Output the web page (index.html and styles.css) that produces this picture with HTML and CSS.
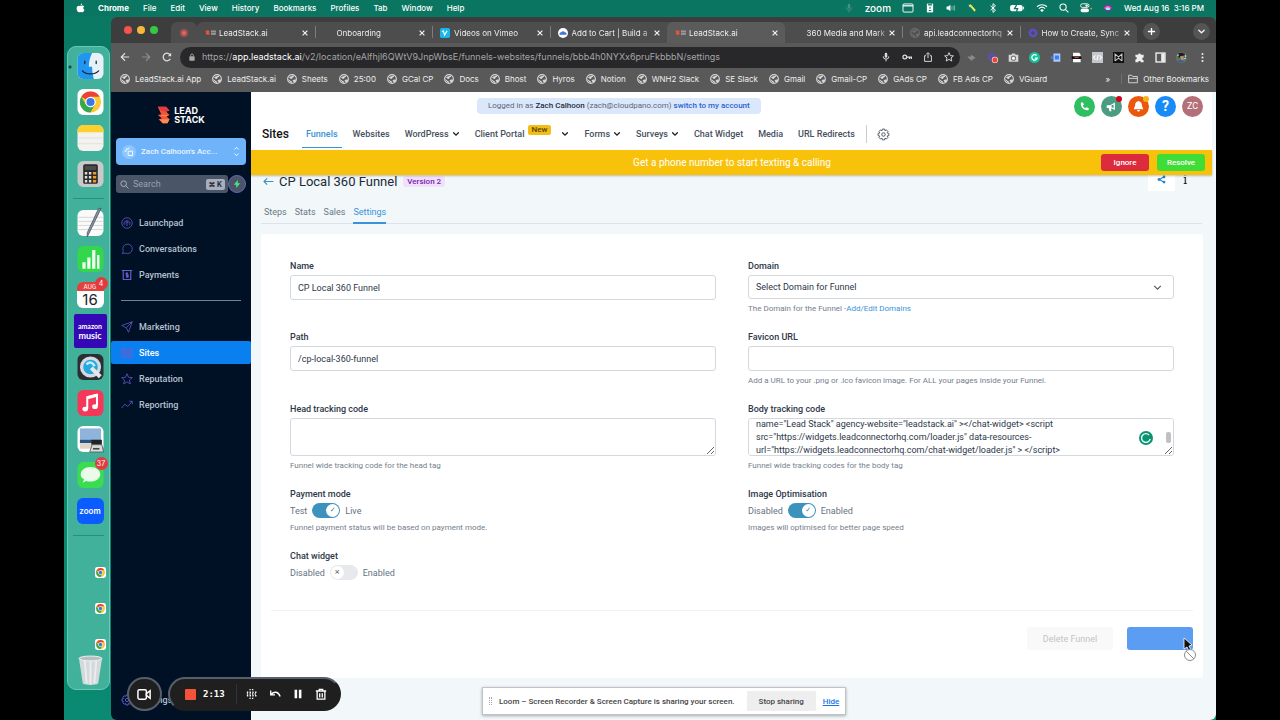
FILE: index.html
```html
<!DOCTYPE html>
<html lang="en">
<head>
    <meta charset="UTF-8">
    <meta name="viewport" content="width=device-width, initial-scale=1.0">
    <title>CP Local 360 Funnel | LeadStack.ai</title>
    <link rel="stylesheet" href="styles.css">
</head>
<body>
    <!-- shared icons -->
    <svg class="sprite" aria-hidden="true">
        <symbol id="i-globe" viewBox="0 0 16 16">
            <circle cx="8" cy="8" r="7" fill="none" stroke="currentColor" stroke-width="1.8"/>
            <path d="M2 5c3 0 3 3 5 3s1-3 3-3 1-3 2-3M1.500 9c3-1 3 2 5 2s1 3 1 4M9 10c2-2 4-1 6-1l-2 4c-3 0-4-1-4-3z" fill="currentColor"/>
        </symbol>
        <symbol id="i-x" viewBox="0 0 10 10">
            <path d="M2 2l6 6M8 2l-6 6" fill="none" stroke="currentColor" stroke-width="1.500"/>
        </symbol>
        <symbol id="i-chev" viewBox="0 0 10 10">
            <path d="M2 3.500l3 3 3-3" fill="none" stroke="currentColor" stroke-width="1.600" stroke-linecap="round"/>
        </symbol>
        <symbol id="i-mic" viewBox="0 0 16 16">
            <rect x="6" y="1" width="4" height="8" rx="2" fill="currentColor"/>
            <path d="M3.500 7a4.500 4.500 0 0 0 9 0M8 11.500V15" fill="none" stroke="currentColor" stroke-width="1.500"/>
        </symbol>
        <symbol id="i-search" viewBox="0 0 16 16">
            <circle cx="6.500" cy="6.500" r="5" fill="none" stroke="currentColor" stroke-width="1.700"/>
            <path d="M10.500 10.500L15 15" stroke="currentColor" stroke-width="1.700"/>
        </symbol>
        <symbol id="i-gear" viewBox="0 0 24 24">
            <path d="M10 2h4l.7 3 2.600-1.600 2.900 2.900L18.600 9l3.400 1v4l-3.400.8 1.600 2.700-2.800 2.900-2.700-1.700-.7 3.300h-4l-.8-3.300-2.700 1.700-2.900-2.900L5.300 15 2 14v-4l3.300-.8-1.600-2.700 2.800-2.900L9.300 5z" fill="none" stroke="currentColor" stroke-width="1.700" stroke-linejoin="round"/>
            <circle cx="12" cy="12" r="3.200" fill="none" stroke="currentColor" stroke-width="1.700"/>
        </symbol>
        <symbol id="i-lead" viewBox="0 0 20 10">
            <path d="M1 1h5l2 2-2 1 2 1-1 3H3L1 6l1-1-1-2z" fill="#e5553a"/>
            <path d="M10 1h8v3h-8zM10 5h8v3h-8z" fill="#a9a9a9"/>
            <path d="M12 2v5M15 1v6" stroke="#666"/>
        </symbol>
        <symbol id="i-chrome" viewBox="0 0 32 32">
            <rect width="32" height="32" rx="7" fill="#fff"/>
            <circle cx="16" cy="16" r="13" fill="#fcc934"/>
            <path d="M16 16L4.700 9.500A13 13 0 0 1 27.300 9.500H16z" fill="#ea4335"/>
            <path d="M4.700 9.500A13 13 0 0 0 16 29l5.500-9.800L16 16 10.400 19z" fill="#34a853"/>
            <circle cx="16" cy="16" r="6.500" fill="#fff"/>
            <circle cx="16" cy="16" r="5" fill="#3b78e7"/>
        </symbol>
    </svg>

    <div class="desktop">
        <header class="menubar">
            <svg class="apple" viewBox="0 0 16 18"><path d="M11 1c0 2-1.500 3.300-3 3.300C8 2.500 9.400 1.200 11 1zM8.200 5.500C9 5.500 10 4.700 11.500 4.700c1.300 0 2.400.7 3 1.600-2.400 1.500-2 5 .7 6-.7 2-2.200 4.500-3.700 4.500-1.200 0-1.600-.7-3-.7s-1.900.7-3 .7C3.300 16.800 1 13.200 1 9.700c0-3 1.900-4.900 4-4.900 1.400 0 2.400.7 3.200.7z" fill="#fff"/></svg>
            <nav class="menus">
                <b>Chrome</b><span>File</span><span>Edit</span><span>View</span><span>History</span><span>Bookmarks</span><span>Profiles</span><span>Tab</span><span>Window</span><span>Help</span>
            </nav>
            <div class="status">
                <svg class="dim" viewBox="0 0 16 16"><use href="#i-mic"/></svg>
                <span class="zoom-word">zoom</span>
                <svg class="wide" viewBox="0 0 18 16"><rect x="1" y="1.500" width="16" height="13" rx="1.500" fill="none" stroke="#fff" stroke-width="1.500"/><path d="M1 4.500h16" stroke="#fff" stroke-width="2"/></svg>
                <svg viewBox="0 0 16 16"><path d="M3 1h10v14H3z" fill="#fff"/><path d="M6 1v2h4V1M8 6v3M6 12h4" fill="none" stroke="#0a7560" stroke-width="1.800"/></svg>
                <svg viewBox="0 0 18 16"><path d="M1 5.500h3L8 2v12l-4-3.500H1z" fill="#fff"/><path d="M10.500 5v6M13 4v8M15.500 3v10" stroke="#fff" stroke-opacity=".7"/></svg>
                <svg viewBox="0 0 16 16"><path d="M3 3l3-1 8 9-2 3z" fill="#f3e84f"/><path d="M3 3l2 4" stroke="#fff"/></svg>
                <svg viewBox="0 0 16 16"><path d="M4 4.500l8 7-4 3.500V1l4 3.500-8 7" fill="none" stroke="#fff" stroke-width="1.500"/></svg>
                <svg class="batt" viewBox="0 0 24 16"><rect x="1" y="3" width="20" height="10" rx="3" fill="#fff"/><path d="M22.500 6v4" stroke="#fff" stroke-width="1.500"/><path d="M12 2L8 9h5l-2 5" fill="none" stroke="#0a7560" stroke-width="2"/></svg>
                <svg class="wide" viewBox="0 0 18 16"><path d="M1 6a11.500 11.500 0 0 1 16 0M4 9a7.500 7.500 0 0 1 10 0" fill="none" stroke="#fff" stroke-width="1.900"/><path d="M9 14.500l-3-3a4.300 4.300 0 0 1 6 0z" fill="#fff"/></svg>
                <svg viewBox="0 0 16 16"><use href="#i-search"/></svg>
                <svg class="wide" viewBox="0 0 20 16"><rect x="1" y="1" width="14" height="6" rx="3" fill="none" stroke="#fff" stroke-width="1.500"/><rect x="1" y="9" width="14" height="6" rx="3" fill="#fff"/><circle cx="11" cy="4" r="2" fill="#fff"/><circle cx="18.500" cy="9" r="1.500" fill="#f59b23"/></svg>
                <svg viewBox="0 0 16 16"><circle cx="8" cy="8" r="7" fill="#514a8d"/><path d="M2 8c4-6 8-4 12 0-4 1-8 5-12 0z" fill="#e86a9a"/><path d="M4 9c3-3 6-2 8 1-2 2-6 2-8-1z" fill="#9ff0ff"/></svg>
                <time>Wed Aug 16&nbsp; 3:16 PM</time>
            </div>
        </header>

        <div class="workspace">
            <aside class="dock" aria-label="Dock">
                <svg class="app" viewBox="0 0 32 32"><rect width="32" height="32" rx="7" fill="#e8f1f7"/><path d="M7 0h11c-3 6-4 11-4 17h4c0 6 1 10 2 15H7a7 7 0 0 1-7-7V7a7 7 0 0 1 7-7z" fill="#2196f0"/><path d="M9 10v3M23 10v3M6 22c5 5 15 5 20 0" fill="none" stroke="#123" stroke-width="1.500" stroke-linecap="round"/></svg>
                <svg class="app"><use href="#i-chrome"/></svg>
                <svg class="app" viewBox="0 0 32 32"><rect width="32" height="32" rx="7" fill="#f3f2ee"/><path d="M0 9V7a7 7 0 0 1 7-7h18a7 7 0 0 1 7 7v2z" fill="#fcd12f"/><path d="M1 16h30M1 23h30" stroke="#deddd9"/></svg>
                <svg class="app" viewBox="0 0 32 32"><rect width="32" height="32" rx="7" fill="#c9c9c9"/><rect x="7" y="4" width="18" height="24" rx="2" fill="#292929"/><rect x="9" y="6" width="14" height="5" fill="#4b4b4b"/><path d="M9 15h3M14 15h3M9 20h3M14 20h3M9 25h3M14 25h3" stroke="#ddd" stroke-width="3"/><path d="M19 15h4M19 20h4M19 25h4" stroke="#f39a25" stroke-width="3"/></svg>
                <hr>
                <svg class="app" viewBox="0 0 32 32"><rect width="32" height="32" rx="7" fill="#fafafa"/><path d="M1 9h30M1 14h30M1 19h30M1 24h30" stroke="#cfcfcf"/><path d="M29-2L14 29l-2 4 0-5L26-2z" fill="#8695a5" stroke="#4b5560"/></svg>
                <svg class="app" viewBox="0 0 32 32"><rect width="32" height="32" rx="7" fill="#32d74b"/><path d="M6 20h4v8H6zM12 14h4v14h-4zM18 5h4v23h-4zM24 11h3v17h-3z" fill="#efffef"/></svg>
                <div class="app calendar"><small>AUG</small><strong>16</strong><i class="badge">4</i></div>
                <div class="app amazon"><span>amazon</span><span>music</span></div>
                <svg class="app" viewBox="0 0 32 32"><rect width="32" height="32" rx="7" fill="#2b2f33"/><circle cx="16" cy="16" r="11" fill="#27a9e0" stroke="#d5dbe0" stroke-width="4"/><path d="M11 13c3-4 8-3 10 2" stroke="#bdefff" stroke-width="3" fill="none"/><path d="M17 17l11 11" stroke="#e4e8eb" stroke-width="5"/></svg>
                <svg class="app" viewBox="0 0 32 32"><rect width="32" height="32" rx="7" fill="#f5385a"/><path d="M12 23V9l12-3v14" fill="none" stroke="#fff" stroke-width="2.500"/><path d="M12 9.500l12-3" stroke="#fff" stroke-width="4"/><ellipse cx="9.500" cy="23.500" rx="3.500" ry="3" fill="#fff"/><ellipse cx="21.500" cy="20.500" rx="3.500" ry="3" fill="#fff"/></svg>
                <svg class="app" viewBox="0 0 32 32"><rect width="32" height="32" rx="7" fill="#fff"/><rect x="3" y="3" width="26" height="17" fill="#8fb4dc"/><path d="M3 17h26v4H3z" fill="#2a5384"/><path d="M3 21h26v7H3z" fill="#dfd6c6"/><path d="M17 17h13v6H17z" fill="#222"/><path d="M18 23h12l2 9H15z" fill="#d9dadb" stroke="#555"/><path d="M19 28h8" stroke="#444" stroke-width="2"/></svg>
                <div class="app messages"><svg viewBox="0 0 32 32"><rect width="32" height="32" rx="7" fill="#3bdd50"/><path d="M16 6c7 0 12 4 12 9s-5 9-12 9c-2 0-4 0-5-1-1 1-3 2-5 2 1-1 2-2 2-4-3-1-4-3-4-6 0-5 5-9 12-9z" fill="#eafbe9"/></svg><i class="badge">37</i></div>
                <div class="app zoom">zoom</div>
                <hr class="before-minis">
                <svg class="app mini"><use href="#i-chrome"/></svg>
                <svg class="app mini"><use href="#i-chrome"/></svg>
                <svg class="app mini"><use href="#i-chrome"/></svg>
                <svg class="trash" viewBox="0 0 26 30"><path d="M1 3l4 26c4 2 12 2 16 0l4-26z" fill="#d4d9dc"/><path d="M7 5l2 24M13 5v25M19 5l-2 24" stroke="#e9edef" stroke-width="2"/><ellipse cx="13" cy="3" rx="12" ry="2.500" fill="#b6bfc3" stroke="#eef1f2"/></svg>
            </aside>

            <div class="browser">
                <div class="tabstrip">
                    <div class="lights"><i></i><i></i><i></i></div>
                    <div class="pinned"><i></i></div>
                    <div class="tabs">
                        <div class="tab"><svg class="fav lead"><use href="#i-lead"/></svg><a href="#">LeadStack.ai</a><button aria-label="Close tab"><svg><use href="#i-x"/></svg></button></div>
                        <div class="tab"><i class="fav"></i><a href="#">Onboarding</a><button aria-label="Close tab"><svg><use href="#i-x"/></svg></button></div>
                        <div class="tab"><svg class="fav" viewBox="0 0 12 12"><rect width="12" height="12" rx="2" fill="#1ab7ea"/><path d="M2.500 4.500L4 3.500l1.500 5 3-5" fill="none" stroke="#fff" stroke-width="1.500"/></svg><a href="#">Videos on Vimeo</a><button aria-label="Close tab"><svg><use href="#i-x"/></svg></button></div>
                        <div class="tab"><svg class="fav" viewBox="0 0 12 12"><circle cx="6" cy="6" r="6" fill="#fff"/><path d="M2 8a2 2 0 0 1 2-3 2.500 2.500 0 0 1 4 0 2 2 0 0 1 2 3z" fill="#3f74d8"/></svg><a href="#">Add to Cart | Build a</a><button aria-label="Close tab"><svg><use href="#i-x"/></svg></button></div>
                        <div class="tab active"><svg class="fav lead"><use href="#i-lead"/></svg><a href="#">LeadStack.ai</a><button aria-label="Close tab"><svg><use href="#i-x"/></svg></button></div>
                        <div class="tab"><i class="fav"></i><a href="#">360 Media and Mark</a><button aria-label="Close tab"><svg><use href="#i-x"/></svg></button></div>
                        <div class="tab"><svg class="fav faint"><use href="#i-globe"/></svg><a href="#">api.leadconnectorhq</a><button aria-label="Close tab"><svg><use href="#i-x"/></svg></button></div>
                        <div class="tab"><svg class="fav" viewBox="0 0 12 12"><circle cx="6" cy="6" r="4" fill="none" stroke="#5a4fcf" stroke-width="3" stroke-dasharray="2 1"/><circle cx="6" cy="6" r="3.500" fill="none" stroke="#5a4fcf" stroke-width="2"/></svg><a href="#">How to Create, Sync</a><button aria-label="Close tab"><svg><use href="#i-x"/></svg></button></div>
                    </div>
                    <button class="round" aria-label="New tab"><svg viewBox="0 0 10 10"><path d="M5 1v8M1 5h8" stroke="#fff" stroke-width="1.500"/></svg></button>
                    <button class="round last" aria-label="Search tabs"><svg><use href="#i-chev"/></svg></button>
                </div>

                <div class="toolbar">
                    <div class="history">
                        <button aria-label="Back"><svg viewBox="0 0 12 12"><path d="M11 6H2M6 1.500L1.500 6 6 10.500" fill="none" stroke="#ddd" stroke-width="1.400"/></svg></button>
                        <button aria-label="Forward"><svg viewBox="0 0 12 12"><path d="M1 6h9M6 1.500L10.500 6 6 10.500" fill="none" stroke="#8c8c8c" stroke-width="1.400"/></svg></button>
                        <button aria-label="Reload"><svg viewBox="0 0 12 12"><path d="M10 8a4.500 4.500 0 1 1 0-4" fill="none" stroke="#ddd" stroke-width="1.500"/><path d="M11 1v4H7z" fill="#ddd"/></svg></button>
                    </div>
                    <div class="omnibox">
                        <svg viewBox="0 0 12 12"><rect x="2" y="5" width="8" height="6.500" rx="1" fill="#aaa"/><path d="M4 5V3.500a2 2 0 0 1 4 0V5" fill="none" stroke="#aaa" stroke-width="1.300"/></svg>
                        <div class="url" role="textbox" contenteditable="true" spellcheck="false" aria-label="Address">https://<b>app.leadstack.ai</b>/v2/location/eAlfhjl6QWtV9JnpWbsE/funnels-websites/funnels/bbb4h0NYXx6pruFkbbbN/settings</div>
                        <div class="omni-icons">
                            <svg><use href="#i-mic"/></svg>
                            <svg viewBox="0 0 16 16"><circle cx="4.500" cy="8" r="3" fill="none" stroke="currentColor" stroke-width="2"/><path d="M7.500 8H15v3M12 8v3" fill="none" stroke="currentColor" stroke-width="2"/></svg>
                            <svg viewBox="0 0 16 16"><path d="M5 6H2.500v9h11V6H11M8 10V1.500M5 4l3-3 3 3" fill="none" stroke="currentColor" stroke-width="1.500"/></svg>
                            <svg viewBox="0 0 16 16"><path d="M8 1l2.100 4.800 5 .4-3.900 3.300 1.300 5L8 11.800l-4.500 2.700 1.300-5L1 6.200l5-.4z" fill="none" stroke="currentColor" stroke-width="1.500"/></svg>
                        </div>
                    </div>
                    <div class="extensions">
                        <svg viewBox="0 0 16 16"><path d="M2 6l5 1V4l4 2 3 3-4 1-1 3-4-3z" fill="#8b8b8b"/></svg>
                        <svg viewBox="0 0 16 16"><circle cx="7" cy="7" r="6" fill="#5a50b8"/><circle cx="7" cy="7" r="2.500" fill="#5a5a5a"/><circle cx="11.500" cy="11.500" r="4.500" fill="#fff"/><circle cx="11.500" cy="11.500" r="3.700" fill="#f0443e"/></svg>
                        <svg viewBox="0 0 16 16"><path d="M1 4h4l1-2h4l1 2h4v10H1z" fill="#d6d6d6"/><circle cx="8" cy="9" r="3" fill="#fff" stroke="#777" stroke-width="1.500"/></svg>
                        <svg viewBox="0 0 16 16"><circle cx="8" cy="8" r="8" fill="#15c39a"/><path d="M11 5a4 4 0 1 0 1 4H8.500" fill="none" stroke="#fff" stroke-width="1.800"/></svg>
                        <svg viewBox="0 0 16 16"><path d="M5 2h10v12H5z" fill="#a9c9ff"/><path d="M1 6h3v4H1zM7 5h6v6H7z" fill="#3d7fe8"/></svg>
                        <svg viewBox="0 0 16 16"><path d="M3 1h9l2 3v11H3z" fill="#fff"/><path d="M1 6h14v4H1z" fill="#111"/><path d="M5 8h6" stroke="#e33" stroke-width="1.500"/></svg>
                        <svg viewBox="0 0 16 16"><path d="M0 0h16v16H0z" fill="#c3c6cb"/><path d="M5 5L2 8l3 3M11 5l3 3-3 3M9 4l-2 8" fill="none" stroke="#fff" stroke-width="1.500"/></svg>
                        <svg viewBox="0 0 16 16"><path d="M0 0h16v16H0z" fill="#111"/><path d="M3 13V3l5 4 5-4v10M3 13l5-4 5 4" fill="none" stroke="#ccc" stroke-width="1.500"/></svg>
                        <svg viewBox="0 0 16 16"><path d="M2 4h4a2 2 0 1 1 4 0h4v4a2 2 0 1 0 0 4v3h-4a2 2 0 0 0-4 0H2v-4a2 2 0 0 0 0-4z" fill="#eee"/></svg>
                        <svg viewBox="0 0 16 16"><rect x="1.500" y="1.500" width="13" height="13" fill="none" stroke="#eee" stroke-width="2"/><path d="M9 2h5v12H9z" fill="#eee"/></svg>
                        <svg viewBox="0 0 16 16"><circle cx="8" cy="8" r="8" fill="#5b7763"/><path d="M3 2l5-1 5 2 1 4-3-2-4 1-3 3z" fill="#1d1b1e"/><path d="M6 6h5v5l-3 2z" fill="#c58e6c"/><path d="M3 14l4-3 5 4H5z" fill="#3b57a8"/><path d="M2 5l2-1M13 4l1 3M12 10l2-1" stroke="#dde8d9" stroke-width="1.500"/></svg>
                        <svg viewBox="0 0 16 16"><circle cx="8" cy="3" r="1.500" fill="#eee"/><circle cx="8" cy="8" r="1.500" fill="#eee"/><circle cx="8" cy="13" r="1.500" fill="#eee"/></svg>
                    </div>
                </div>

                <nav class="bookmarks">
                    <a href="#"><svg><use href="#i-globe"/></svg>LeadStack.ai App</a>
                    <a href="#"><svg><use href="#i-globe"/></svg>LeadStack.ai</a>
                    <a href="#"><svg><use href="#i-globe"/></svg>Sheets</a>
                    <a href="#"><svg><use href="#i-globe"/></svg>25:00</a>
                    <a href="#"><svg><use href="#i-globe"/></svg>GCal CP</a>
                    <a href="#"><svg><use href="#i-globe"/></svg>Docs</a>
                    <a href="#"><svg><use href="#i-globe"/></svg>Bhost</a>
                    <a href="#"><svg><use href="#i-globe"/></svg>Hyros</a>
                    <a href="#"><svg><use href="#i-globe"/></svg>Notion</a>
                    <a href="#"><svg><use href="#i-globe"/></svg>WNH2 Slack</a>
                    <a href="#"><svg><use href="#i-globe"/></svg>SE Slack</a>
                    <a href="#"><svg><use href="#i-globe"/></svg>Gmail</a>
                    <a href="#"><svg><use href="#i-globe"/></svg>Gmail-CP</a>
                    <a href="#"><svg><use href="#i-globe"/></svg>GAds CP</a>
                    <a href="#"><svg><use href="#i-globe"/></svg>FB Ads CP</a>
                    <a href="#"><svg><use href="#i-globe"/></svg>VGuard</a>
                    <span class="more">»</span>
                    <a href="#" class="other"><svg viewBox="0 0 16 16"><path d="M1 14V2h5l1.500 2H15v10zM1 7h14" fill="none" stroke="currentColor" stroke-width="1.500"/></svg>Other Bookmarks</a>
                </nav>

                <div class="page">
                    <aside class="sidebar">
                        <div class="logo">
                            <svg viewBox="0 0 20 26"><path d="M1 1h12l5 6-5 1 5 5-5 1 5 5-3 6H8l-6-6 5-1-6-5 5-1z" fill="#f2553c"/><path d="M1 1h12l5 6-6 1-6-1z" fill="#e33b3f"/><path d="M4 13l14 0-5 2-7-1zM4 19l14 0-3 6H8z" fill="#f98d4e"/></svg>
                            <div><span>LEAD</span><span>STACK</span></div>
                        </div>
                        <button class="account">
                            <svg class="spot" viewBox="0 0 16 16"><circle cx="8" cy="8" r="8" fill="#8dc6fd"/><path d="M7 7h5v5H7zM4 8a4 4 0 0 1 4-4M5 4l1 1M8 3v1M3 7h1" fill="none" stroke="#fff"/></svg>
                            <span>Zach Calhoon's Acc...</span>
                            <svg class="updown" viewBox="0 0 10 16"><path d="M2 5l3-3 3 3M2 11l3 3 3-3" fill="none" stroke="#fff" stroke-width="1.300"/></svg>
                        </button>
                        <div class="search-row">
                            <label class="search"><svg><use href="#i-search"/></svg><input type="text" placeholder="Search" aria-label="Search"><kbd>⌘ K</kbd></label>
                            <button class="bolt" aria-label="Quick actions"><svg viewBox="0 0 10 10"><path d="M6 0L1 6h3l0 4 5-6H6z" fill="#4be08c"/></svg></button>
                        </div>
                        <nav class="side-nav">
                            <a href="#"><svg viewBox="0 0 16 16"><circle cx="8" cy="8" r="7"/><path d="M8 12V6M5.500 8.500L8 6l2.500 2.500M5 11c-2-2-1-6 3-6s5 4 3 6"/></svg>Launchpad</a>
                            <a href="#"><svg viewBox="0 0 16 16"><path d="M2 14l1-3.500A6.300 6.300 0 1 1 6 13.500z"/></svg>Conversations</a>
                            <a href="#"><svg viewBox="0 0 16 16"><path d="M1 2h14M3 2v12h10V2M9.500 5.500H7v2.500h2.500v2.500H6.500M8 4.500v7M3 14h10" stroke-width="1.500"/></svg>Payments</a>
                            <hr>
                            <a href="#"><svg viewBox="0 0 16 16"><path d="M15 1L1 6l6 3 3 6zM15 1L7 9"/></svg>Marketing</a>
                            <a href="#" class="current"><svg viewBox="0 0 16 16"><path d="M1.500 2h13v12h-13zM1.500 5h13M5 8h6v3H5z" stroke-width="1.600"/></svg>Sites</a>
                            <a href="#"><svg viewBox="0 0 16 16"><path d="M8 1l2.100 4.800 5 .4-3.900 3.300 1.300 5L8 11.800l-4.500 2.700 1.300-5L1 6.200l5-.4z"/></svg>Reputation</a>
                            <a href="#"><svg viewBox="0 0 16 16"><path d="M1 12l4-5 4 3 6-7M11 3h4v4"/></svg>Reporting</a>
                        </nav>
                        <nav class="side-nav bottom">
                            <a href="#"><svg><use href="#i-gear"/></svg>Settings</a>
                        </nav>
                    </aside>

                    <main class="main">
                        <div class="topbar">
                            <p class="login-note">Logged in as <b>Zach Calhoon</b> (zach@cloudpano.com) <a href="#">switch to my account</a></p>
                            <div class="top-icons">
                                <button class="green" aria-label="Call"><svg viewBox="0 0 16 16"><path d="M3 2l3 0 1 3.500L5.500 7c.7 1.500 2 2.800 3.500 3.500L10.500 9l3.500 1v3c-6 2-13-5-11-11z" fill="#fff"/></svg></button>
                                <button class="sage" aria-label="Announcements"><svg viewBox="0 0 16 16"><path d="M1 6h5l7-4v11l-7-3H1zM4 10h3l1 5H5z" fill="#fff"/><path d="M8 6.500l3-1.500v5L8 9z" fill="#4b9c80"/></svg><i class="dot red"></i></button>
                                <button class="orange" aria-label="Notifications"><svg viewBox="0 0 16 16"><path d="M8 0c4 1 5 3 5 7l2 5H1l2-5c0-4 1-6 5-7zM6 13h4c0 3-4 3-4 0z" fill="#fff"/></svg><i class="dot amber"></i></button>
                                <button class="blue" aria-label="Help"><b>?</b></button>
                                <button class="mauve" aria-label="Profile">ZC</button>
                            </div>
                        </div>
                        <nav class="site-nav">
                            <h2>Sites</h2>
                            <a href="#" class="on">Funnels</a>
                            <a href="#">Websites</a>
                            <a href="#">WordPress <svg><use href="#i-chev"/></svg></a>
                            <a href="#">Client Portal <em>New</em> <svg><use href="#i-chev"/></svg></a>
                            <a href="#">Forms <svg><use href="#i-chev"/></svg></a>
                            <a href="#">Surveys <svg><use href="#i-chev"/></svg></a>
                            <a href="#">Chat Widget</a>
                            <a href="#">Media</a>
                            <a href="#">URL Redirects</a>
                            <button aria-label="Site settings"><svg><use href="#i-gear"/></svg></button>
                        </nav>
                        <div class="banner">
                            <p>Get a phone number to start texting &amp; calling</p>
                            <button class="ignore">Ignore</button>
                            <button class="resolve">Resolve</button>
                        </div>

                        <div class="title-row">
                            <a href="#" aria-label="Back"><svg viewBox="0 0 12 10"><path d="M11.500 5H1M4.500 1.500L1 5l3.500 3.500" fill="none" stroke="#3a93c8" stroke-width="1.300"/></svg></a>
                            <h1>CP Local 360 Funnel</h1>
                            <span class="version">Version 2</span>
                            <button class="share" aria-label="Share"><svg viewBox="0 0 16 16"><path d="M12 3.500L4 8l8 4.500" fill="none" stroke="#2a83c4" stroke-width="2"/><circle cx="12.500" cy="3.500" r="2.500" fill="#2a83c4"/><circle cx="3.500" cy="8" r="2.500" fill="#2a83c4"/><circle cx="12.500" cy="12.500" r="2.500" fill="#2a83c4"/></svg></button>
                            <span class="info">i</span>
                        </div>
                        <nav class="sub-tabs">
                            <a href="#">Steps</a><a href="#">Stats</a><a href="#">Sales</a><a href="#" class="on">Settings</a>
                        </nav>

                        <form class="card">
                            <div class="fields">
                                <div class="field">
                                    <label for="name">Name</label>
                                    <input type="text" id="name" value="CP Local 360 Funnel">
                                </div>
                                <div class="field">
                                    <label for="domain">Domain</label>
                                    <div class="select-wrap"><select id="domain"><option>Select Domain for Funnel</option></select><svg viewBox="0 0 10 10"><path d="M2 3.500l3 3 3-3" fill="none" stroke="#555"/></svg></div>
                                    <small>The Domain for the Funnel -<a href="#">Add/Edit Domains</a></small>
                                </div>
                                <div class="field">
                                    <label for="path">Path</label>
                                    <input type="text" id="path" value="/cp-local-360-funnel">
                                </div>
                                <div class="field">
                                    <label for="favicon">Favicon URL</label>
                                    <input type="text" id="favicon">
                                    <small>Add a URL to your .png or .ico favicon image. For ALL your pages inside your Funnel.</small>
                                </div>
                                <div class="field">
                                    <label for="head-code">Head tracking code</label>
                                    <textarea id="head-code"></textarea>
                                    <small>Funnel wide tracking code for the head tag</small>
                                </div>
                                <div class="field">
                                    <label for="body-code">Body tracking code</label>
                                    <div class="code-wrap">
                                        <textarea id="body-code" spellcheck="false">&lt;chat-widget
style="--chat-widget-primary-color: #188bf6;"
location-id="eAlfhjl6QWtV9JnpWbsE"
agency-
name="Lead Stack" agency-website="leadstack.ai" &gt;&lt;/chat-widget&gt; &lt;script
src="https://widgets.leadconnectorhq.com/loader.js" data-resources-
url="https://widgets.leadconnectorhq.com/chat-widget/loader.js" &gt; &lt;/script&gt;


</textarea>
                                        <svg class="checker" viewBox="0 0 16 16"><circle cx="8" cy="8" r="8" fill="#0f9171"/><path d="M11.500 4.500a5 5 0 1 0 1.300 4.500" fill="none" stroke="#d9fff3" stroke-width="1.600"/></svg>
                                        <i class="thumb"></i>
                                    </div>
                                    <small>Funnel wide tracking codes for the body tag</small>
                                </div>
                                <div class="field">
                                    <label for="pay-mode">Payment mode</label>
                                    <div class="switch-row"><span>Test</span><input type="checkbox" id="pay-mode" class="switch" checked><span>Live</span></div>
                                    <small>Funnel payment status will be based on payment mode.</small>
                                </div>
                                <div class="field">
                                    <label for="img-opt">Image Optimisation</label>
                                    <div class="switch-row"><span>Disabled</span><input type="checkbox" id="img-opt" class="switch" checked><span>Enabled</span></div>
                                    <small>Images will optimised for better page speed</small>
                                </div>
                                <div class="field">
                                    <label for="chat">Chat widget</label>
                                    <div class="switch-row"><span>Disabled</span><input type="checkbox" id="chat" class="switch"><span>Enabled</span></div>
                                </div>
                            </div>
                            <div class="card-actions">
                                <button type="button" class="delete" disabled>Delete Funnel</button>
                                <button type="button" class="save" disabled aria-label="Save"></button>
                            </div>
                        </form>
                    </main>
                </div>
            </div>
        </div>

        <!-- floating overlays -->
        <div class="recorder">
            <button class="cam" aria-label="Camera"><svg viewBox="0 0 16 16"><rect x="1" y="3" width="9" height="10" rx="1.500" fill="none" stroke="#fff" stroke-width="1.600"/><path d="M10 7l4-3v8l-4-3z" fill="none" stroke="#fff" stroke-width="1.600"/></svg></button>
            <div class="controls">
                <button class="stop" aria-label="Stop"></button>
                <span class="timer">2:13</span>
                <i class="split"></i>
                <svg viewBox="0 0 14 14"><path d="M1 5h12M1 9h12" stroke="#fff" stroke-width="1.600" stroke-dasharray="1.600 1.600"/><path d="M4 2h6M4 12h6M1 7h12" stroke="#fff" stroke-width="1.500" stroke-dasharray="1.500 1.500"/></svg>
                <svg viewBox="0 0 14 14"><path d="M2 3v5h5M2.500 7.500C6 3.500 11 4 13 10" fill="none" stroke="#fff" stroke-width="1.600"/></svg>
                <svg viewBox="0 0 14 14"><path d="M4.500 2v10M9.500 2v10" stroke="#fff" stroke-width="3"/></svg>
                <svg viewBox="0 0 14 14"><path d="M1 3.500h12M5 3V1.500h4V3M2.500 4v9h9V4M5.500 6v5M8.500 6v5" fill="none" stroke="#fff" stroke-width="1.500"/></svg>
            </div>
        </div>
        <div class="sharing">
            <i class="grip"></i>
            <p>Loom – Screen Recorder &amp; Screen Capture is sharing your screen.</p>
            <button>Stop sharing</button>
            <a href="#">Hide</a>
        </div>
        <svg class="cursor" viewBox="0 0 16 26"><path d="M3 1l0 11 3-2 2 4 2-1-2-4 3-1z" fill="#111" stroke="#fff" stroke-width=".8"/><circle cx="9" cy="18" r="5.500" fill="#fff" stroke="#8d8d8d"/><path d="M5 14l8 8" stroke="#8d8d8d"/></svg>
    </div>

    <script>
        // keep the end of the snippet in view
        document.getElementById('body-code').scrollTop = 53;
    </script>
</body>
</html>
```
FILE: styles.css
```css
:root {
    --navy: #001025;
    --teal: #0a7560;
    --text: #2d3748;
    --muted: #75808d;
    --link: #3a93d8;
    --line: #d3d8de;
    --page-bg: #f2f7fa;
    --purple: #695ed0;
    --ui: Inter, "Liberation Sans", sans-serif;
}

* {
    box-sizing: border-box;
    margin: 0;
    padding: 0;
}

html,
body {
    height: 100%;
    overflow: hidden;
}

body {
    background: #000;
    padding: 0 5%;
    font-family: Roboto, "Liberation Sans", sans-serif;
    font-size: 9px;
    color: var(--text);
}

a {
    color: inherit;
    text-decoration: none;
}

button {
    border: none;
    background: none;
    font: inherit;
    color: inherit;
}

input,
select,
textarea {
    font: inherit;
    color: inherit;
    outline: none;
}

svg {
    display: block;
    flex: none;
}

.sprite {
    position: absolute;
    width: 0;
    height: 0;
}

.desktop {
    position: relative;
    height: 100%;
    display: flex;
    flex-direction: column;
    background: linear-gradient(#0a7862, #0a8a72);
}

/* menu bar */
.menubar {
    height: 16px;
    display: flex;
    align-items: center;
    padding: 0 12px;
    background: var(--teal);
    color: #fff;
    font-family: var(--ui);
    font-size: 8px;
    font-weight: 500;
}

.apple {
    width: 9px;
    height: 10px;
    margin-right: 13px;
}

.menus {
    display: flex;
    gap: 14px;
}

.status {
    margin-left: auto;
    display: flex;
    align-items: center;
    gap: 11px;
}

.status svg {
    width: 10px;
    height: 10px;
}

.status .wide {
    width: 12px;
}

.status .batt {
    width: 16px;
}

.status .dim {
    color: #4c8f80;
}

.zoom-word {
    font-size: 10px;
}

.workspace {
    flex: 1;
    min-height: 0;
    display: flex;
    padding-top: 1px;
}

/* dock */
.dock {
    width: 43px;
    margin: 29px 1px 30px 3px;
    padding: 6px 0 6px 3px;
    border: 1px solid #6cc7b3;
    border-radius: 9px;
    background: #42b19c;
    display: flex;
    flex-direction: column;
    align-items: center;
    gap: 10px;
    flex: none;
}

.app {
    width: 27px;
    height: 26px;
    flex: none;
    position: relative;
    border-radius: 6px;
    overflow: visible;
}

/* running marker; the browser window is to the right of the dock */
.dock {
    background-image: radial-gradient(circle, #0c4a3d 1px, transparent 2px);
    background-size: 4px 36px;
    background-repeat: no-repeat;
    background-position: 0 2px;
}

.dock hr {
    width: 31px;
    border: none;
    border-top: 1px solid #2b8d7b;
    margin: 1px 3px 1px 0;
}

.dock .before-minis {
    margin-bottom: 13px;
}

.calendar {
    background: linear-gradient(#e4413d 9px, #fff 9px);
    text-align: center;
    font-family: var(--ui);
    color: #222;
}

.calendar small {
    display: block;
    font-size: 6px;
    line-height: 9px;
    color: #fff;
}

.calendar strong {
    display: block;
    font-size: 15px;
    line-height: 17px;
    font-weight: 400;
}

.badge {
    position: absolute;
    top: -5px;
    right: -4px;
    min-width: 13px;
    height: 13px;
    border-radius: 7px;
    background: #e23b3f;
    color: #fff;
    font: 7px/13px var(--ui);
    text-align: center;
}

.amazon {
    width: 33px;
    height: 34px;
    margin: -4px 0;
    border-radius: 2px;
    background: #3408b5;
    color: #fff;
    display: flex;
    flex-direction: column;
    align-items: center;
    justify-content: center;
    font: 700 7px/10px Lato, sans-serif;
}

.amazon span + span {
    font-size: 9px;
}

.zoom {
    background: #0b5cff;
    color: #fff;
    font: 600 8px/26px var(--ui);
    text-align: center;
}

.messages svg {
    width: 27px;
    height: 26px;
}

.mini {
    width: 11px;
    height: 11px;
    margin: 8px 0 7px 20px;
}

.trash {
    width: 25px;
    height: 30px;
    margin-top: -12px;
}

/* browser window */
.browser {
    flex: 1;
    min-width: 0;
    display: flex;
    flex-direction: column;
    overflow: hidden;
    background: #595959;
    border-radius: 6px;
    font-family: var(--ui);
    font-size: 8px;
    color: #eee;
}

.tabstrip {
    height: 26px;
    display: flex;
    align-items: center;
    background: #3d3d3d;
    flex: none;
}

.lights {
    width: 60px;
    display: flex;
    gap: 5px;
    padding-left: 13px;
}

.lights i {
    width: 8px;
    height: 8px;
    border-radius: 50%;
    background: #f4544d;
}

.lights i:nth-child(2) {
    background: #f6b73c;
}

.lights i:nth-child(3) {
    background: #36c845;
}

.pinned {
    width: 26px;
    height: 21px;
    margin-top: 5px;
    border-radius: 6px 6px 0 0;
    background: #4d4d4d;
    display: flex;
    align-items: center;
    justify-content: center;
}

.pinned i {
    width: 8px;
    height: 8px;
    border-radius: 50%;
    background: #e26767;
    border: 2px solid #a34f4f;
}

.tabs {
    flex: 1;
    min-width: 0;
    display: flex;
    height: 21px;
    margin-top: 5px;
    background: #4d4d4d;
    border-radius: 6px 6px 0 0;
}

.tab {
    flex: 1;
    min-width: 0;
    display: flex;
    align-items: center;
    padding: 0 6px 0 8px;
    position: relative;
}

.tab + .tab::before {
    content: "";
    position: absolute;
    left: 0;
    top: 4px;
    height: 12px;
    border-left: 1px solid #7c7c7c;
}

.tab.active {
    background: #5b5b5b;
    border-radius: 6px 6px 0 0;
}

.tab.active::before,
.tab.active + .tab::before {
    display: none;
}

.fav {
    width: 10px;
    height: 10px;
    flex: none;
    margin-right: 4px;
}

.fav.lead {
    width: 12px;
    margin-right: 2px;
}

.fav.faint {
    color: #6f6f6f;
}

.tab a {
    flex: 1;
    min-width: 0;
    margin-right: 1px;
    white-space: nowrap;
    line-height: 12px;
    mask-image: linear-gradient(90deg, #000 85%, rgba(0, 0, 0, 0.3));
}

.tab button svg {
    width: 8px;
    height: 8px;
}

.round {
    width: 17px;
    height: 17px;
    margin: 2px 0 0 6px;
    border-radius: 50%;
    background: #545454;
    display: grid;
    place-items: center;
}

.round svg {
    width: 9px;
    height: 9px;
}

.round.last {
    margin: 2px 6px 0 33px;
}

.toolbar {
    height: 28px;
    display: flex;
    align-items: center;
    padding: 0 9px;
    flex: none;
}

.history {
    display: flex;
    gap: 11px;
    width: 60px;
}

.history svg {
    width: 10px;
    height: 10px;
}

.omnibox {
    flex: 1;
    min-width: 0;
    height: 21px;
    border-radius: 11px;
    background: #28282a;
    display: flex;
    align-items: center;
    padding: 0 6px 0 8px;
}

.omnibox > svg {
    width: 8px;
    height: 8px;
    margin-right: 6px;
}

.url {
    flex: 1;
    min-width: 0;
    overflow: hidden;
    white-space: nowrap;
    font-size: 9px;
    line-height: 14px;
    color: #a5a5a5;
}

.url b {
    color: #fff;
    font-weight: 400;
}

.omni-icons {
    display: flex;
    gap: 11px;
    color: #ddd;
}

.omni-icons svg {
    width: 10px;
    height: 10px;
}

.extensions {
    display: flex;
    gap: 10px;
    padding-left: 6px;
}

.extensions svg {
    width: 11px;
    height: 11px;
}

.extensions svg:last-child {
    margin-right: -1px;
}

.bookmarks {
    height: 21px;
    display: flex;
    align-items: center;
    gap: 11px;
    padding: 0 7px 5px 9px;
    white-space: nowrap;
    flex: none;
}

.bookmarks a {
    display: flex;
    align-items: center;
    gap: 5px;
}

.bookmarks svg {
    width: 10px;
    height: 10px;
    color: #d5d5d5;
}

.more {
    margin-left: auto;
}

.other {
    border-left: 1px solid #6f6f6f;
    padding-left: 6px;
}

.page {
    flex: 1;
    min-height: 0;
    display: flex;
    font-family: Roboto, "Liberation Sans", sans-serif;
    color: var(--text);
    font-size: 9px;
}

/* sidebar */
.sidebar {
    width: 140px;
    flex: none;
    background: var(--navy);
    color: #b6c2d0;
    display: flex;
    flex-direction: column;
    padding-top: 14px;
}

.logo {
    display: flex;
    justify-content: center;
    gap: 3px;
}

.logo svg {
    width: 14px;
    height: 18px;
}

.logo span {
    display: block;
    font: 700 9px/9px var(--ui);
    color: #fff;
}

.account {
    margin: 14px 5px 0;
    height: 27px;
    border-radius: 4px;
    background: #6fb4fb;
    color: #e9f5ff;
    display: flex;
    align-items: center;
    padding: 0 6px;
    gap: 5px;
    font-size: 8px;
    font-weight: 500;
}

.account span {
    flex: 1;
    text-align: left;
}

.spot {
    width: 14px;
    height: 14px;
}

.updown {
    width: 7px;
    height: 11px;
}

.search-row {
    display: flex;
    align-items: center;
    margin: 10px 5px 18px;
}

.search {
    flex: 1;
    min-width: 0;
    height: 18px;
    border-radius: 3px;
    background: #4a5568;
    display: flex;
    align-items: center;
    padding: 0 3px 0 4px;
    gap: 4px;
    color: #a9b3c0;
}

.search svg {
    width: 9px;
    height: 9px;
}

.search input {
    flex: 1;
    min-width: 0;
    border: none;
    background: none;
}

.search input::placeholder {
    color: #98a2b0;
}

.search kbd {
    background: #a6afbb;
    color: #1f2937;
    border-radius: 2px;
    padding: 0 3px;
    font: 700 7px/11px Inter, "DejaVu Sans", sans-serif;
}

.bolt {
    width: 18px;
    height: 18px;
    border-radius: 50%;
    border: 1px solid #6a63b5;
    background: #4a5568;
    display: grid;
    place-items: center;
}

.bolt svg {
    width: 8px;
    height: 8px;
}

.side-nav {
    display: flex;
    flex-direction: column;
    gap: 3px;
}

.side-nav a {
    height: 23px;
    display: flex;
    align-items: center;
    gap: 6px;
    padding-left: 10px;
    font-weight: 500;
    border-radius: 2px;
}

.side-nav svg {
    width: 12px;
    height: 12px;
    fill: none;
    stroke: var(--purple);
    color: #6f63dd;
}

.side-nav hr {
    border: none;
    border-top: 1px solid #74808f;
    margin: 11px 10px 11px;
}

.side-nav .current {
    background: #0a7ff0;
    color: #fff;
}

.side-nav.bottom {
    margin-top: auto;
    padding-bottom: 9px;
}

/* main column */
.main {
    flex: 1;
    min-width: 0;
    background: var(--page-bg);
    padding-right: 4px;
}

.topbar {
    height: 28px;
    background: #fff;
    display: flex;
    align-items: center;
    justify-content: space-between;
    padding: 0 9px 0 226px;
}

.login-note {
    background: #dbe8fb;
    border-radius: 4px;
    padding: 0 11px;
    font-size: 8px;
    line-height: 16px;
    color: #5b6675;
}

.login-note b {
    color: #222c3a;
    font-weight: 500;
}

.login-note a {
    color: #2b5fd0;
    font-weight: 500;
}

.top-icons {
    display: flex;
    gap: 6px;
}

.top-icons button {
    position: relative;
    width: 21px;
    height: 21px;
    border-radius: 50%;
    color: #fff;
    display: grid;
    place-items: center;
}

.top-icons b {
    font-size: 14px;
}

.top-icons svg {
    width: 11px;
    height: 11px;
}

.green { background: #2fbf62; }
.sage { background: #4b9c80; }
.orange { background: #ea580c; }
.blue { background: #188bf6; }
.mauve { background: #b37078; }

.dot {
    position: absolute;
    top: 0;
    right: 0;
    width: 6px;
    height: 6px;
    border-radius: 50%;
}

.dot.red { background: #d0021b; }
.dot.amber { background: #f5b21a; }

.site-nav {
    height: 30px;
    background: #fff;
    display: flex;
    align-items: center;
    padding: 0 0 2px 11px;
    gap: 15px;
    font-weight: 500;
    color: #46505e;
    white-space: nowrap;
}

.site-nav h2 {
    font-size: 12px;
    font-weight: 500;
    color: #111;
    margin-right: 2px;
}

.site-nav a {
    display: flex;
    align-items: center;
    gap: 3px;
    height: 28px;
}

.site-nav a svg {
    width: 8px;
    height: 8px;
    color: #222;
}

.site-nav .on {
    color: var(--link);
    border-bottom: 1px solid var(--link);
    padding: 0 4px;
    margin: 0 -4px;
}

.site-nav em {
    font-style: normal;
    font-size: 8px;
    line-height: 10px;
    padding: 0 4px;
    border-radius: 2px;
    background: #f2bd16;
    color: #594300;
    margin: 0 7px 9px 0;
}

.site-nav button {
    border-left: 1px solid #ccc;
    height: 18px;
    padding-left: 10px;
    margin-left: -4px;
}

.site-nav button svg {
    width: 13px;
    height: 13px;
}

.banner {
    height: 25px;
    background: #f9c20a;
    color: #fff;
    display: flex;
    align-items: center;
    gap: 8px;
    padding-right: 7px;
    box-shadow: 0 1px 2px rgba(0, 0, 0, 0.25);
    position: relative;
}

.banner p {
    flex: 1;
    text-align: center;
    font-size: 10px;
    padding-left: 120px;
}

.banner button {
    width: 48px;
    height: 17px;
    border-radius: 3px;
    font-size: 8px;
    font-weight: 500;
}

.ignore { background: #dc2b3c; }
.resolve { background: #3fdd35; }

.title-row {
    height: 24px;
    display: flex;
    align-items: flex-start;
    padding: 0 25px 0 12px;
}

.title-row > a svg {
    width: 11px;
    height: 9px;
    margin-top: 2px;
}

.title-row h1 {
    font-size: 13px;
    line-height: 13px;
    font-weight: 400;
    color: #202a37;
    margin: 0 6px 0 5px;
}

.version {
    margin-top: 1px;
    padding: 0 4px;
    border-radius: 3px;
    background: #f0e0fb;
    color: #7a22ae;
    font-size: 8px;
    font-weight: 500;
    line-height: 11px;
}

.share {
    margin-left: auto;
    width: 27px;
    height: 16px;
    background: #fff;
    display: grid;
    justify-items: center;
    align-content: start;
}

.share svg {
    width: 9px;
    height: 9px;
}

.info {
    margin-left: 8px;
    font: 12px/11px "DejaVu Serif", serif;
    color: #111;
}

.sub-tabs {
    height: 25px;
    margin: 0 10px 10px;
    padding: 0 3px;
    border-bottom: 1px solid #dde3e8;
    display: flex;
    gap: 8px;
    color: #6b7785;
}

.sub-tabs a {
    height: 25px;
    line-height: 27px;
}

.sub-tabs .on {
    color: var(--link);
    border-bottom: 2px solid var(--link);
}

/* settings form */
.card {
    margin: 0 9px 0 10px;
    padding: 26px 10px 28px;
    background: #fff;
    border-radius: 2px;
}

.fields {
    display: grid;
    grid-template-columns: 1fr 1fr;
    gap: 17px 32px;
    padding: 0 19px 30px;
}

.field > label {
    display: block;
    line-height: 13px;
    margin-bottom: 2px;
    font-weight: 500;
}

.field small {
    display: block;
    font-size: 8px;
    line-height: 11px;
    margin-top: 4px;
    color: var(--muted);
}

.field small a {
    color: var(--link);
}

.field input[type="text"],
.field select,
.field textarea {
    display: block;
    width: 100%;
    height: 25px;
    padding: 0 7px;
    border: 1px solid var(--line);
    border-radius: 3px;
    background: #fff;
}

.field textarea {
    height: 38px;
    line-height: 13px;
    overflow: auto;
}

.select-wrap,
.code-wrap {
    position: relative;
}

.field select {
    height: 24px;
    appearance: none;
}

.select-wrap svg {
    position: absolute;
    right: 11px;
    top: 7px;
    width: 11px;
    height: 11px;
}

.checker {
    position: absolute;
    right: 21px;
    top: 13px;
    width: 14px;
    height: 14px;
}

/* custom scroll thumb over the code box */
.thumb {
    position: absolute;
    right: 3px;
    top: 14px;
    width: 5px;
    height: 11px;
    border-radius: 2px;
    background: #bfc1c3;
}

.switch-row {
    display: flex;
    align-items: center;
    gap: 5px;
    height: 15px;
    color: #667280;
}

.switch {
    appearance: none;
    width: 28px;
    height: 15px;
    border-radius: 8px;
    background: #e7e9ec;
    padding: 1px;
    display: flex;
}

.switch::before {
    content: "×";
    width: 13px;
    height: 13px;
    border-radius: 50%;
    background: #fff;
    color: #777;
    font: 700 7px/13px "DejaVu Sans", sans-serif;
    text-align: center;
}

.switch:checked {
    background: #3b93bd;
    justify-content: flex-end;
}

.switch:checked::before {
    content: "✓";
    color: #3b7fa5;
}

.card-actions {
    border-top: 1px solid #f0f2f3;
    padding-top: 16px;
    display: flex;
    justify-content: flex-end;
    gap: 14px;
}

.card-actions button {
    height: 23px;
    border-radius: 3px;
}

.delete {
    width: 86px;
    background: #f9f9f9;
    color: #c5c3bf;
}

.save {
    width: 66px;
    background: #5b9df2;
}

/* overlays */
.recorder {
    position: absolute;
    left: 63px;
    bottom: 9px;
    display: flex;
    gap: 6px;
}

.cam,
.controls {
    height: 34px;
    border-radius: 17px;
    background: #1f1f1f;
    border: 2px solid #56606c;
}

.cam {
    width: 35px;
    display: grid;
    place-items: center;
}

.cam svg {
    width: 15px;
    height: 15px;
}

.controls {
    display: flex;
    align-items: center;
    gap: 11px;
    padding: 0 12px 0 15px;
    border-color: #56606c #1f1f1f #1f1f1f #56606c;
}

.stop {
    width: 11px;
    height: 11px;
    border-radius: 1px;
    background: #f4523b;
}

.timer {
    color: #fff;
    font: 700 9px "DejaVu Sans Mono", monospace;
    margin-left: -4px;
}

.split {
    width: 1px;
    height: 20px;
    background: #333;
    margin-right: -2px;
}

.controls svg {
    width: 12px;
    height: 12px;
}

.sharing {
    position: absolute;
    left: 418px;
    bottom: 5px;
    height: 28px;
    background: #fff;
    border: 1px solid #bfc3c7;
    box-shadow: 0 1px 3px rgba(0, 0, 0, 0.3);
    display: flex;
    align-items: center;
    gap: 7px;
    padding: 0 6px;
    font: 500 8px Roboto, sans-serif;
    color: #444;
    white-space: nowrap;
}

.sharing p {
    margin-right: 5px;
}

.grip {
    width: 3px;
    height: 8px;
    border: dotted #aaa;
    border-width: 0 1px;
}

.sharing button {
    height: 20px;
    padding: 0 12px;
    background: #eee;
}

.sharing a {
    color: #1a73e8;
    text-decoration: underline;
}

.cursor {
    position: absolute;
    right: 19px;
    bottom: 57px;
    width: 16px;
    height: 26px;
}
```
